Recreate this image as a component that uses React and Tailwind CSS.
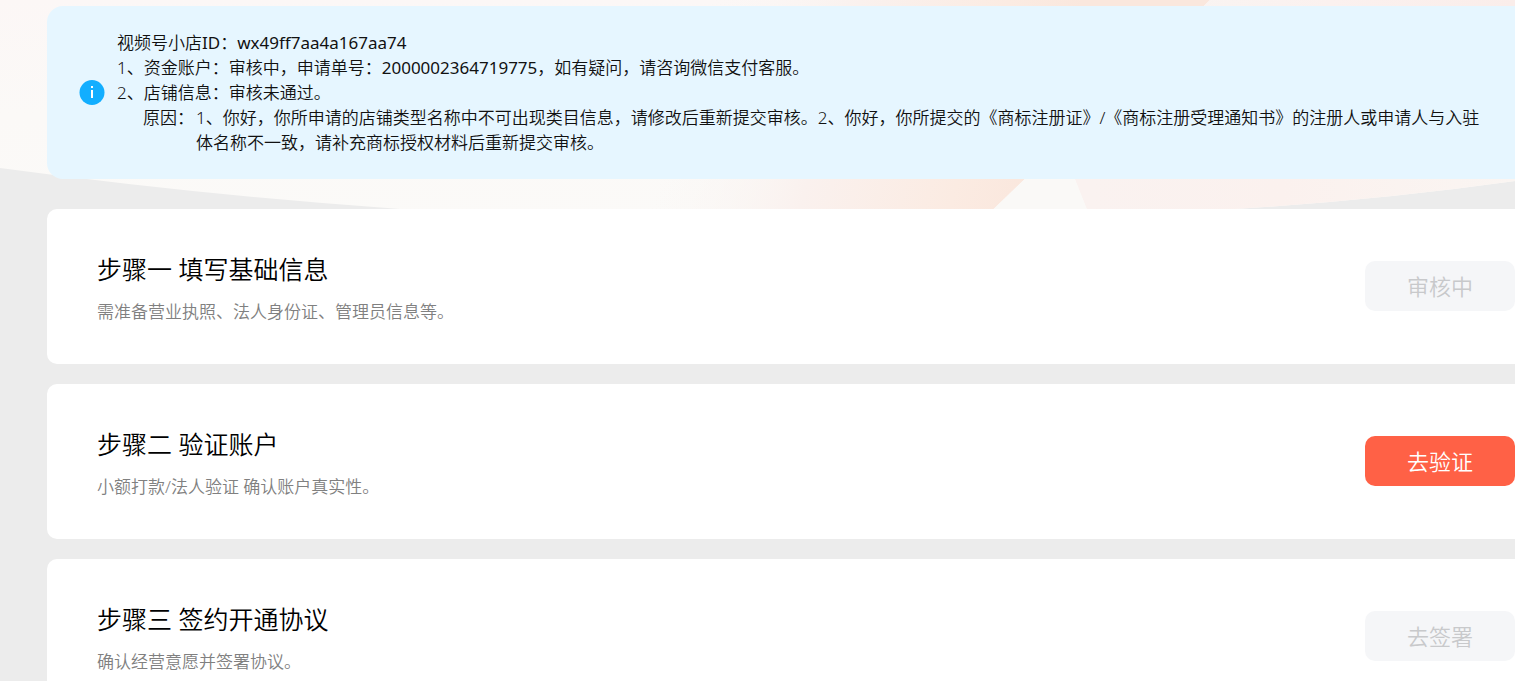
const steps = [
  {
    title: "步骤一 填写基础信息",
    text: "需准备营业执照、法人身份证、管理员信息等。",
    action: "审核中",
    active: false,
  },
  {
    title: "步骤二 验证账户",
    text: "小额打款/法人验证 确认账户真实性。",
    action: "去验证",
    active: true,
  },
  {
    title: "步骤三 签约开通协议",
    text: "确认经营意愿并签署协议。",
    action: "去签署",
    active: false,
  },
];

function Backdrop() {
  return (
    <svg
      className="absolute inset-x-0 top-0 -z-10 h-[230px] w-full"
      viewBox="0 0 1515 230"
      preserveAspectRatio="none"
      aria-hidden="true"
    >
      <defs>
        <linearGradient id="base" x1="0" y1="0" x2="0" y2="1">
          <stop offset="0" stopColor="#fcf7f6" />
          <stop offset="0.5" stopColor="#fbf9f7" />
          <stop offset="1" stopColor="#fbfaf8" />
        </linearGradient>
        <linearGradient id="peach" gradientUnits="userSpaceOnUse" x1="690" y1="70" x2="1035" y2="170">
          <stop offset="0" stopColor="#faf7f5" stopOpacity="0" />
          <stop offset="0.4" stopColor="#faf1ee" />
          <stop offset="0.8" stopColor="#fbebe2" />
          <stop offset="1" stopColor="#fae7dd" />
        </linearGradient>
        <linearGradient id="pink" gradientUnits="userSpaceOnUse" x1="1180" y1="0" x2="1515" y2="0">
          <stop offset="0" stopColor="#f9f4f2" />
          <stop offset="0.45" stopColor="#fbf1ef" />
          <stop offset="1" stopColor="#faedea" />
        </linearGradient>
        <linearGradient id="pinkFade" gradientUnits="userSpaceOnUse" x1="1090" y1="0" x2="1515" y2="0">
          <stop offset="0" stopColor="#faf2f0" />
          <stop offset="0.45" stopColor="#fbf1ee" />
          <stop offset="1" stopColor="#faf5f2" />
        </linearGradient>
        <clipPath id="bowl">
          <path d="M0 0H1515V181Q1380 200 1235 209Q1000 226 800 226Q600 226 400 209Q200 195 0 168Z" />
        </clipPath>
      </defs>
      <g clipPath="url(#bowl)">
        <rect width="1515" height="230" fill="url(#base)" />
        <path d="M560 0H1210L972 230H560Z" fill="url(#peach)" />
        <path d="M1210 0H1515V144H1061Z" fill="url(#pink)" />
        <path d="M1061 144H1515V230H1095Z" fill="url(#pinkFade)" />
        <path d="M1061 144L972 230H1095Z" fill="#faf9f7" />
      </g>
    </svg>
  );
}

function Notice() {
  return (
    <section className="flex items-center rounded-l-2xl bg-[#e6f6ff] py-6 pl-8">
      <svg className="mr-3 size-[26px] shrink-0" viewBox="0 0 26 26" aria-hidden="true">
        <circle cx="13" cy="12.5" r="12.5" fill="#12aeff" />
        <rect x="12" y="6" width="2" height="2" fill="#fff" />
        <rect x="12" y="10" width="2" height="8" fill="#fff" />
      </svg>
      <div className="text-[17px] leading-[25px] whitespace-nowrap text-[#111]">
        <p>
          视频号小店<span className="font-normal">ID</span>：
          <span className="font-normal">wx49ff7aa4a167aa74</span>
        </p>
        <p>
          1、资金账户：审核中，申请单号：
          <span className="font-normal">2000002364719775</span>
          ，如有疑问，请咨询微信支付客服。
        </p>
        <p>2、店铺信息：审核未通过。</p>
        <div className="flex pl-[26px]">
          <span className="w-[53px] shrink-0">原因：</span>
          <p>
            1、你好，你所申请的店铺类型名称中不可出现类目信息，请修改后重新提交审核。2、你好，你所提交的《商标注册证》/《商标注册受理通知书》的注册人或申请人与入驻
            <br />
            体名称不一致，请补充商标授权材料后重新提交审核。
          </p>
        </div>
      </div>
    </section>
  );
}

function Step({ title, text, action, active }) {
  return (
    <li className="flex items-center justify-between rounded-l-[10px] bg-white pt-[39px] pb-10 pl-[50px]">
      <div>
        <h2 className="text-[25px] leading-[42px] text-black">{title}</h2>
        <p className="mt-[9px] text-[17px] leading-[25px] text-[#808080]">{text}</p>
      </div>
      <button
        type="button"
        disabled={!active}
        className={
          active
            ? "h-[50px] w-[150px] shrink-0 rounded-[10px] bg-[#ff6146] text-[22px] text-white"
            : "h-[50px] w-[150px] shrink-0 rounded-[10px] bg-[#f5f6f8] text-[22px] text-[#c8c9cb]"
        }
      >
        {action}
      </button>
    </li>
  );
}

export default function App() {
  return (
    <main className="relative isolate h-screen overflow-hidden bg-[#ececec] pt-1.5 pl-[47px] font-['Noto_Sans','Noto_Sans_CJK_SC',sans-serif] font-[350]">
      <Backdrop />
      <Notice />
      <ol className="mt-[30px] flex flex-col gap-5">
        {steps.map((step) => (
          <Step key={step.title} {...step} />
        ))}
      </ol>
    </main>
  );
}
